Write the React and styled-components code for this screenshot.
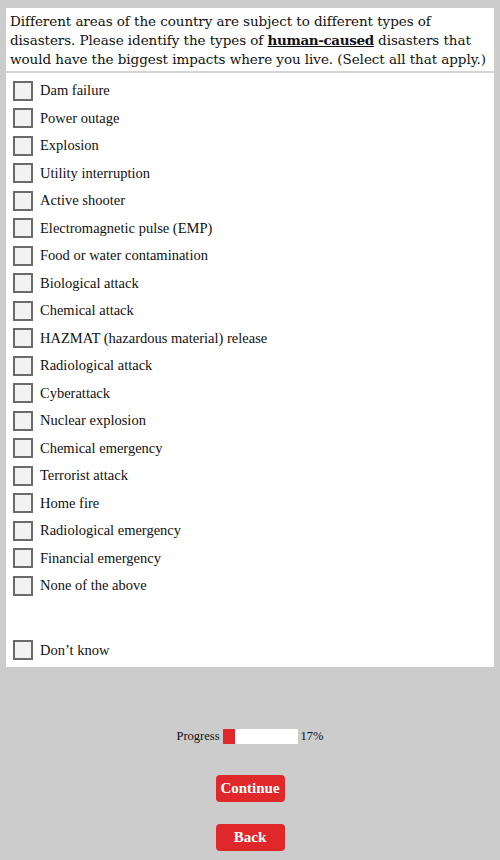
import React from 'react'
import styled, { createGlobalStyle } from 'styled-components'

const OPTIONS = [
  'Dam failure',
  'Power outage',
  'Explosion',
  'Utility interruption',
  'Active shooter',
  'Electromagnetic pulse (EMP)',
  'Food or water contamination',
  'Biological attack',
  'Chemical attack',
  'HAZMAT (hazardous material) release',
  'Radiological attack',
  'Cyberattack',
  'Nuclear explosion',
  'Chemical emergency',
  'Terrorist attack',
  'Home fire',
  'Radiological emergency',
  'Financial emergency',
  'None of the above',
]

const PROGRESS = 17

export default function App() {
  return (
    <>
      <GlobalStyle />
      <Page>
        <Panel>
          <Question>
            Different areas of the country are subject to different types of
            <br />
            disasters. Please identify the types of <Strong>human-caused</Strong> disasters that
            <br />
            would have the biggest impacts where you live. (Select all that apply.)
          </Question>
          <List>
            {OPTIONS.map((label) => (
              <Option key={label}>
                <Box />
                <Label>{label}</Label>
              </Option>
            ))}
            <Option $gap>
              <Box />
              <Label>Don’t know</Label>
            </Option>
          </List>
        </Panel>
        <Footer>
          <ProgressRow>
            <ProgressLabel>Progress</ProgressLabel>
            <Track>
              <Fill style={{ width: `${PROGRESS}%` }} />
            </Track>
            <ProgressLabel>{PROGRESS}%</ProgressLabel>
          </ProgressRow>
          <Button>Continue</Button>
          <Button>Back</Button>
        </Footer>
      </Page>
    </>
  )
}

const GlobalStyle = createGlobalStyle`
  html, body {
    margin: 0;
    background: #cccccc;
  }
`

const Page = styled.div`
  width: 500px;
  height: 860px;
  padding: 8px 6px 0;
  box-sizing: border-box;
  display: flex;
  flex-direction: column;
`

const Panel = styled.div`
  background: #ffffff;
  display: flex;
  flex-direction: column;
`

const Question = styled.div`
  padding: 4px 4px 2px;
  border-bottom: 2px solid #d4d4d4;
  font-family: 'DejaVu Serif', serif;
  font-size: 13.5px;
  letter-spacing: -0.06px;
  line-height: 19px;
  white-space: nowrap;
  overflow: hidden;
  color: #111;
`

const Strong = styled.span`
  font-weight: bold;
  letter-spacing: -0.35px;
  text-decoration: underline;
`

const List = styled.div`
  display: flex;
  flex-direction: column;
  padding: 4px 0 3px 7px;
`

const Option = styled.label`
  height: 27.5px;
  display: flex;
  align-items: center;
  gap: 7px;
  margin-top: ${(p) => (p.$gap ? '37px' : '0')};
`

const Box = styled.span`
  width: 20px;
  height: 20px;
  box-sizing: border-box;
  border: 2px solid #6b6b6b;
  background: #f2f2f2;
  flex-shrink: 0;
`

const Label = styled.span`
  font-family: 'Liberation Serif', serif;
  font-size: 14.5px;
  color: #111;
`

const Footer = styled.div`
  display: flex;
  flex-direction: column;
  align-items: center;
  padding-top: 62px;
  gap: 22px;
`

const ProgressRow = styled.div`
  display: flex;
  align-items: center;
  gap: 3px;
  margin-bottom: 9px;
`

const ProgressLabel = styled.span`
  font-family: 'Liberation Serif', serif;
  font-size: 12.5px;
  color: #111;
`

const Track = styled.div`
  width: 75px;
  height: 15px;
  background: #ffffff;
  display: flex;
`

const Fill = styled.div`
  height: 100%;
  background: #e0282a;
`

const Button = styled.button`
  width: 69px;
  height: 27px;
  border: none;
  border-radius: 4px;
  background: #e0282a;
  color: #ffffff;
  font-family: 'Liberation Serif', serif;
  font-weight: bold;
  font-size: 15px;
  padding: 0;
`
